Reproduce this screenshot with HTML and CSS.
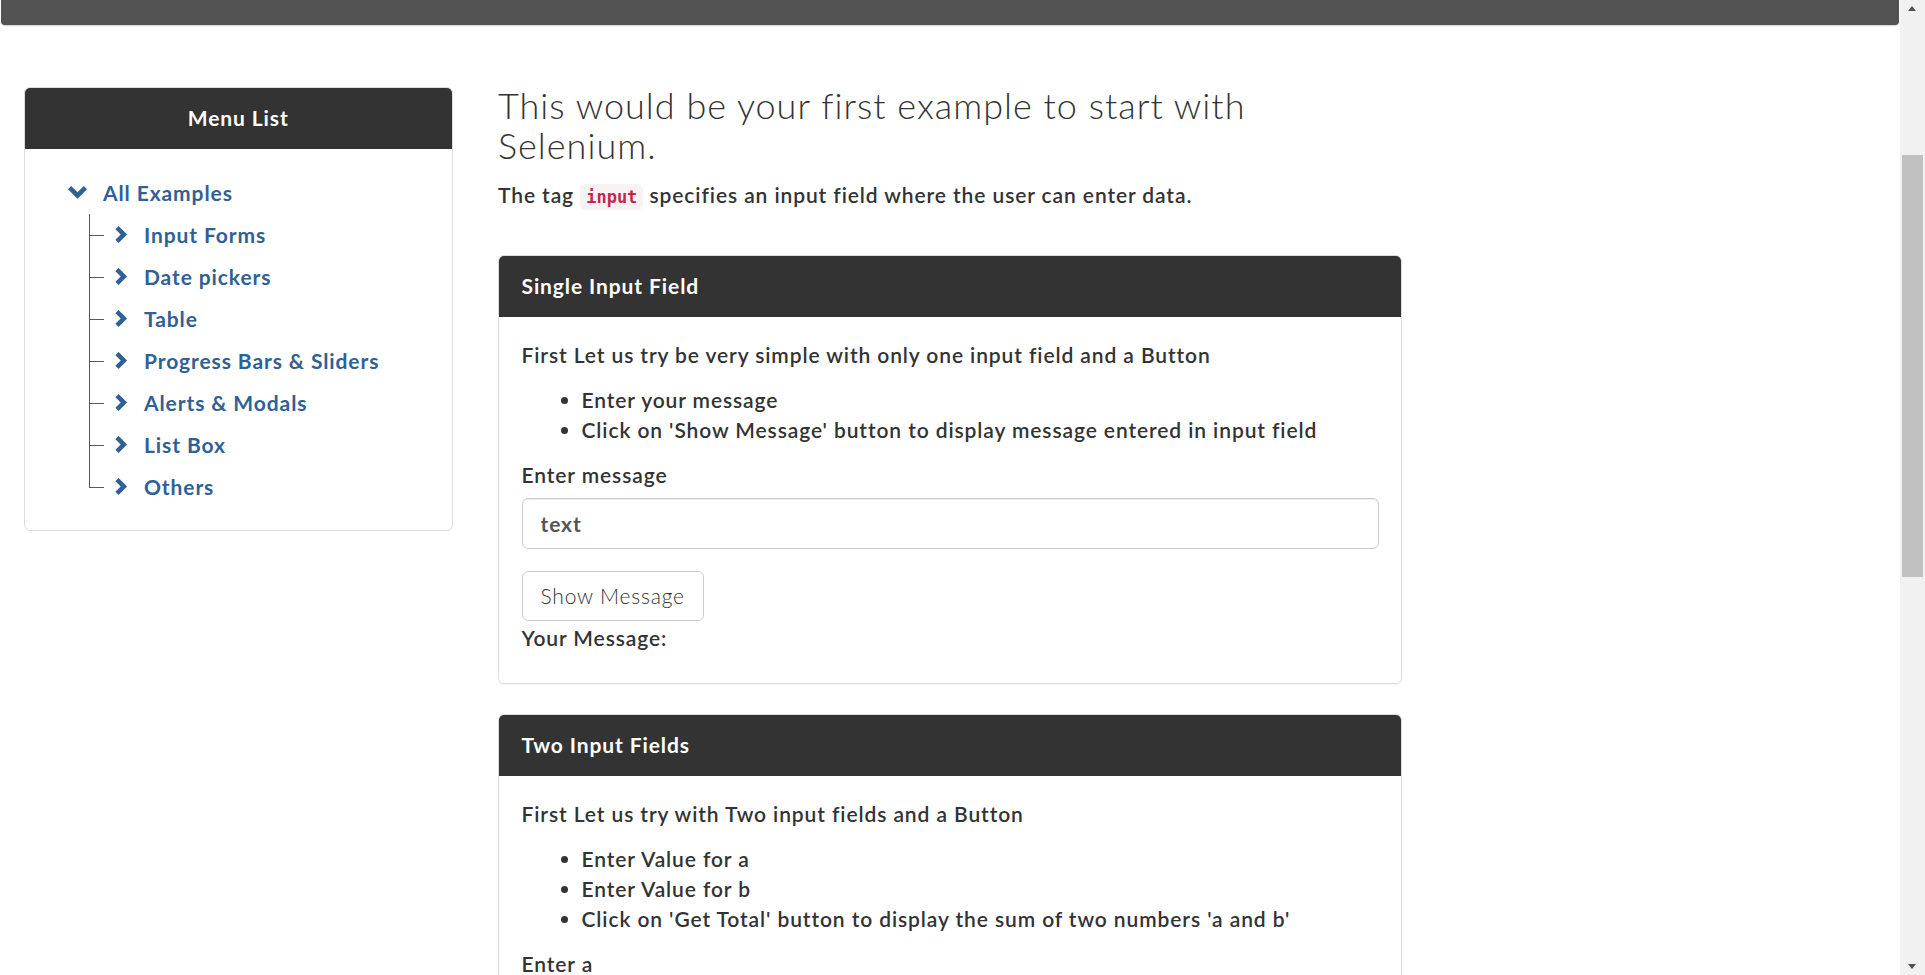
FILE: index.html
```html
<!DOCTYPE html>
<html lang="en">
<head>
<meta charset="utf-8">
<title>Selenium Easy - Simple Form</title>
<link rel="stylesheet" href="styles.css">
</head>
<body>
<div class="page">
  <div class="topbar"></div>
  <div class="layout">
    <aside class="side">
      <div class="menu">
        <div class="menu-head">Menu List</div>
        <div class="menu-body">
          <div class="tree-root">
            <svg class="chev-down" width="19" height="13" viewBox="0 0 19 13"><polygon points="0,3.2 3.2,0 9.5,6.3 15.8,0 19,3.2 9.5,12.7"/></svg>
            <a class="tree-link" href="#">All Examples</a>
          </div>
          <ul class="tree">
            <li><svg class="chev-right" width="13" height="17" viewBox="0 0 13 17"><polygon points="3.6,0 12.1,8.5 3.6,17 0.4,13.8 5.7,8.5 0.4,3.2"/></svg><a class="tree-link" href="#">Input Forms</a></li>
            <li><svg class="chev-right" width="13" height="17" viewBox="0 0 13 17"><polygon points="3.6,0 12.1,8.5 3.6,17 0.4,13.8 5.7,8.5 0.4,3.2"/></svg><a class="tree-link" href="#">Date pickers</a></li>
            <li><svg class="chev-right" width="13" height="17" viewBox="0 0 13 17"><polygon points="3.6,0 12.1,8.5 3.6,17 0.4,13.8 5.7,8.5 0.4,3.2"/></svg><a class="tree-link" href="#">Table</a></li>
            <li><svg class="chev-right" width="13" height="17" viewBox="0 0 13 17"><polygon points="3.6,0 12.1,8.5 3.6,17 0.4,13.8 5.7,8.5 0.4,3.2"/></svg><a class="tree-link" href="#">Progress Bars &amp; Sliders</a></li>
            <li><svg class="chev-right" width="13" height="17" viewBox="0 0 13 17"><polygon points="3.6,0 12.1,8.5 3.6,17 0.4,13.8 5.7,8.5 0.4,3.2"/></svg><a class="tree-link" href="#">Alerts &amp; Modals</a></li>
            <li><svg class="chev-right" width="13" height="17" viewBox="0 0 13 17"><polygon points="3.6,0 12.1,8.5 3.6,17 0.4,13.8 5.7,8.5 0.4,3.2"/></svg><a class="tree-link" href="#">List Box</a></li>
            <li><svg class="chev-right" width="13" height="17" viewBox="0 0 13 17"><polygon points="3.6,0 12.1,8.5 3.6,17 0.4,13.8 5.7,8.5 0.4,3.2"/></svg><a class="tree-link" href="#">Others</a></li>
          </ul>
        </div>
      </div>
    </aside>
    <main class="main">
      <h3 class="title">This would be your first example to start with<br>Selenium.</h3>
      <p class="intro">The tag <code class="tag">input</code> specifies an input field where the user can enter data.</p>

      <div class="card">
        <div class="card-head">Single Input Field</div>
        <div class="card-body">
          <p class="lead">First Let us try be very simple with only one input field and a Button</p>
          <ul class="steps">
            <li>Enter your message</li>
            <li>Click on 'Show Message' button to display message entered in input field</li>
          </ul>
          <div class="form-group">
            <label class="lbl" for="user-message">Enter message</label>
            <input class="field" id="user-message" type="text" value="text">
          </div>
          <button class="btn" type="button">Show Message</button>
          <label class="lbl">Your Message:</label>
        </div>
      </div>

      <div class="card">
        <div class="card-head">Two Input Fields</div>
        <div class="card-body">
          <p class="lead">First Let us try with Two input fields and a Button</p>
          <ul class="steps">
            <li>Enter Value for a</li>
            <li>Enter Value for b</li>
            <li>Click on 'Get Total' button to display the sum of two numbers 'a and b'</li>
          </ul>
          <div class="form-group">
            <label class="lbl" for="sum1">Enter a</label>
            <input class="field" id="sum1" type="text" value="">
          </div>
          <div class="form-group">
            <label class="lbl" for="sum2">Enter b</label>
            <input class="field" id="sum2" type="text" value="">
          </div>
          <button class="btn" type="button">Get Total</button>
          <label class="lbl">Total a + b =</label>
        </div>
      </div>
    </main>
  </div>
</div>
<div class="scrollbar">
  <span class="sb-up"></span>
  <span class="sb-thumb"></span>
  <span class="sb-down"></span>
</div>
</body>
</html>
```

FILE: styles.css
```css
html, body {
  margin: 0;
  padding: 0;
  overflow: hidden;
  background: #fff;
}

body {
  font-family: Lato, "Liberation Sans", sans-serif;
  font-size: 21px;
  font-weight: 600;
  line-height: 30px;
  letter-spacing: 0.9px;
  color: #333;
}

.page {
  width: 1900px;
}

.topbar {
  height: 25px;
  margin: 0 1px;
  background: #535353;
  border-radius: 0 0 4px 4px;
  box-shadow: 0 1px 1px rgba(0, 0, 0, 0.18);
}

.layout {
  display: flex;
  padding-top: 60px;
}

.side {
  width: 475px;
  box-sizing: border-box;
  padding: 1.5px 22.5px 0 24px;
}

.menu {
  border: 1px solid #ddd;
  border-radius: 6px;
  overflow: hidden;
}

.menu-head {
  background: #333;
  color: #fff;
  font-weight: 700;
  text-align: center;
  padding: 15px 0;
  border-bottom: 1px solid #333;
}

.menu-body {
  padding: 23px 0 22.5px 43px;
}

.tree-root {
  display: flex;
  align-items: center;
  height: 42px;
  gap: 16px;
}

.chev-down, .chev-right {
  fill: #2f6196;
  flex: none;
}

.tree-link {
  color: #2f6196;
  text-decoration: none;
  font-weight: 700;
}

.tree {
  list-style: none;
  margin: 0 0 0 21px;
  padding: 0;
}

.tree li {
  position: relative;
  display: flex;
  align-items: center;
  gap: 16px;
  height: 42px;
  padding-left: 26px;
}

.tree li::before {
  content: "";
  position: absolute;
  left: 0;
  top: 0;
  width: 14px;
  height: 21px;
  border-left: 1px solid #2f6196;
  border-bottom: 1px solid #2f6196;
}

.tree li:not(:last-child)::after {
  content: "";
  position: absolute;
  left: 0;
  top: 21px;
  bottom: 0;
  border-left: 1px solid #2f6196;
}

.main {
  width: 950px;
  box-sizing: border-box;
  padding: 0 23px 0 23px;
}

.title {
  margin: 0 0 15px;
  padding-top: 1px;
  font-size: 36px;
  font-weight: 300;
  line-height: 39.6px;
  letter-spacing: 1px;
  color: #333;
}

.intro {
  margin: 0 0 42.5px;
}

.tag {
  font-family: "DejaVu Sans Mono", "Liberation Mono", monospace;
  font-size: 17px;
  font-weight: 700;
  letter-spacing: 0;
  color: #c7254e;
  background: #f9f2f4;
  padding: 3px 6px;
  border-radius: 6px;
}

.card {
  border: 1px solid #ddd;
  border-radius: 6px;
  margin-bottom: 30px;
  overflow: hidden;
  box-shadow: 0 1px 1px rgba(0, 0, 0, 0.05);
}

.card-head {
  background: #333;
  color: #fff;
  font-weight: 700;
  padding: 15px 22.5px;
  border-bottom: 1px solid #333;
}

.card-body {
  padding: 23.7px 22.5px 22.3px;
}

.lead {
  margin: 0 0 15px;
}

.steps {
  margin: 0 0 15px;
  padding-left: 60px;
}

.form-group {
  margin-bottom: 22.5px;
}

.lbl {
  display: block;
  margin-bottom: 7.5px;
}

.field {
  display: block;
  width: 100%;
  box-sizing: border-box;
  height: 51px;
  padding: 9px 18px;
  font-family: inherit;
  font-size: 21px;
  font-weight: 700;
  letter-spacing: 0.9px;
  color: #555;
  border: 1px solid #ccc;
  border-radius: 6px;
  box-shadow: inset 0 1px 1px rgba(0, 0, 0, 0.075);
  outline: none;
}

.btn {
  display: block;
  margin-bottom: 1.5px;
  padding: 9px 18px;
  font-family: inherit;
  font-size: 21px;
  font-weight: 300;
  line-height: 30px;
  letter-spacing: 0.8px;
  color: #333;
  background: #fff;
  border: 1px solid #ccc;
  border-radius: 6px;
}

.scrollbar {
  position: fixed;
  top: 0;
  right: 0;
  width: 25px;
  height: 100%;
  background: #f1f1f1;
}

.sb-thumb {
  position: absolute;
  left: 2px;
  right: 2px;
  top: 155px;
  height: 422px;
  background: #c1c1c1;
}

.sb-up, .sb-down {
  position: absolute;
  left: 8px;
  width: 0;
  height: 0;
  border-left: 4.5px solid transparent;
  border-right: 4.5px solid transparent;
}

.sb-up {
  top: 6px;
  border-bottom: 5px solid #505050;
}

.sb-down {
  bottom: 6px;
  border-top: 5px solid #505050;
}
```
